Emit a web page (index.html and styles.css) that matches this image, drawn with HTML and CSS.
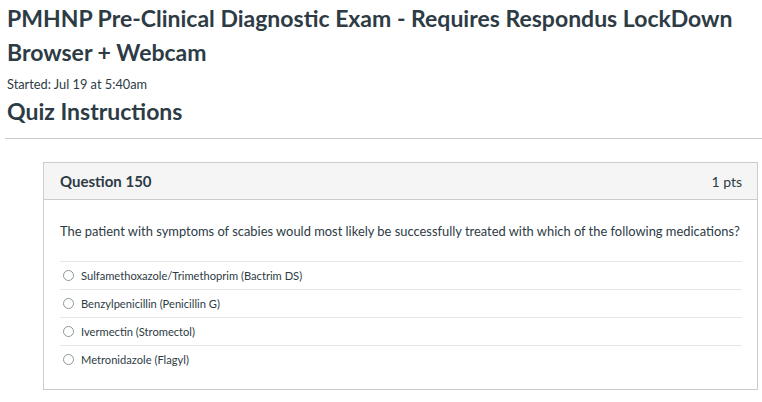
FILE: index.html
```html
<!DOCTYPE html>
<html lang="en">
<head>
    <meta charset="UTF-8">
    <title>Quiz</title>
    <link rel="stylesheet" href="styles.css">
</head>
<body>
<div id="quiz-page">
    <h1 class="quiz-title">PMHNP Pre-Clinical Diagnostic Exam - Requires Respondus LockDown Browser + Webcam</h1>
    <div class="quiz-started">Started: Jul 19 at 5:40am</div>
    <h2 class="quiz-subtitle">Quiz Instructions</h2>
    <hr class="quiz-rule">
    <div class="question">
        <div class="question-header">
            <span class="question-name">Question 150</span>
            <span class="question-points">1 pts</span>
        </div>
        <div class="question-body">
            <div class="question-text">The patient with symptoms of scabies would most likely be successfully treated with which of the following medications?</div>
            <div class="answers">
                <label class="answer"><span class="radio"></span>Sulfamethoxazole/Trimethoprim (Bactrim DS)</label>
                <label class="answer"><span class="radio"></span>Benzylpenicillin (Penicillin G)</label>
                <label class="answer"><span class="radio"></span>Ivermectin (Stromectol)</label>
                <label class="answer"><span class="radio"></span>Metronidazole (Flagyl)</label>
            </div>
        </div>
    </div>
</div>
</body>
</html>
```

FILE: styles.css
```css
body {
    margin: 0;
    padding: 0;
    font-family: Lato, "Noto Sans", sans-serif;
    color: #2d3b45;
    background: #ffffff;
}
#quiz-page {
    padding: 0 4px 0 7px;
}
.quiz-title {
    margin: 1px 0 0 0;
    font-size: 23px;
    line-height: 34px;
    font-weight: 700;
}
.quiz-started {
    margin-top: 7px;
    font-size: 12.8px;
    line-height: 16px;
}
.quiz-subtitle {
    margin: 4px 0 0 0;
    font-size: 23px;
    line-height: 30px;
    font-weight: 700;
}
.quiz-rule {
    margin: 12px -4px 0 -2px;
    border: 0;
    border-top: 1px solid #c7cdd1;
}
.question {
    margin: 23px 0 0 36px;
    border: 1px solid #c7cdd1;
}
.question-header {
    display: flex;
    justify-content: space-between;
    align-items: center;
    height: 36px;
    padding: 0 15px 0 16px;
    background: #f5f5f5;
    border-bottom: 1px solid #c7cdd1;
    font-size: 15px;
    font-weight: 700;
}
.question-points {
    font-weight: 400;
    font-size: 14px;
}
.question-body {
    padding: 22px 12px 16px 16px;
}
.question-text {
    font-size: 12.9px;
    line-height: 18px;
    white-space: nowrap;
}
.answers {
    margin: 21px 3px 0 0;
}
.answer {
    display: flex;
    align-items: center;
    height: 27px;
    border-top: 1px solid #e6e6e6;
    font-size: 11.15px;
}
.radio {
    width: 9px;
    height: 9px;
    border: 1px solid #8b969e;
    border-radius: 50%;
    margin: 0 7px 0 3px;
}
```
